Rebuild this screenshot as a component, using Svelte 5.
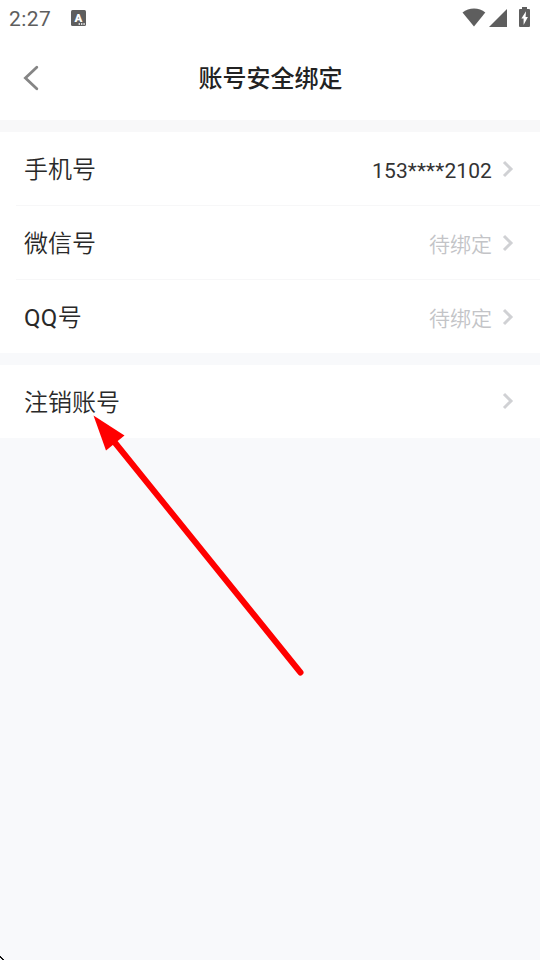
<script>
  const bindings = [
    { prefix: '', label: '手机号', value: '153****2102', bound: true },
    { prefix: '', label: '微信号', value: '待绑定', bound: false },
    { prefix: 'QQ', label: '号', value: '待绑定', bound: false }
  ];
</script>

{#snippet chevron()}
  <svg class="chevron" width="12" height="18" viewBox="0 0 12 18">
    <path d="M2 2 L9 9 L2 16" fill="none" stroke="currentColor" stroke-width="3" />
  </svg>
{/snippet}

<div class="screen">
  <div class="status">
    <span class="time">2:27</span>
    <svg class="app" width="15" height="16" viewBox="0 0 15 16">
      <rect width="15" height="16" rx="1.5" fill="#5e5e5e" />
      <text x="7.3" y="11.8" text-anchor="middle" font-size="11.5" font-weight="900" fill="#fff">A</text>
      <path d="M7.6 14 H14" stroke="#fff" stroke-width="1.4" stroke-dasharray="1.4 1" />
    </svg>
    <svg class="signals" width="70" height="22" viewBox="0 0 70 22">
      <g fill="#5e5e5e">
        <path d="M.5 6.6 C7 1.2 17.2 1.2 23.3 6.6 L12 20.5 Z" />
        <path d="M45 3 V21 H27 Z" />
        <path d="M60 3 V1 H65 V3 H67 Q68 3 68 4 V20 Q68 21 67 21 H58 Q57 21 57 20 V4 Q57 3 58 3 Z" />
      </g>
      <path d="M64 5.2 L59.4 12.6 H61.6 V19 L65.9 10.9 H63.6 Z" fill="#fff" />
    </svg>
  </div>

  <header>
    <svg class="back" width="18" height="26" viewBox="0 0 18 26">
      <path d="M14.8 2.2 L3.4 13 L14.8 23.8" fill="none" stroke="#858585" stroke-width="2.8" stroke-linecap="round" />
    </svg>
    <h1>账号安全绑定</h1>
  </header>

  <section class="group">
    {#each bindings as item}
      <div class="row">
        <span class="label"><span class="latin">{item.prefix}</span>{item.label}</span>
        <span class="value" class:bound={item.bound}>{item.value}</span>
        {@render chevron()}
      </div>
    {/each}
  </section>

  <section class="group last">
    <div class="row">
      <span class="label">注销账号</span>
      {@render chevron()}
    </div>
  </section>

  <svg class="pointer" width="540" height="960" viewBox="0 0 540 960">
    <path d="M112 439 L300.5 672.5" stroke="#f00" stroke-width="6" stroke-linecap="round" />
    <path d="M93.5 415.5 L124.5 435.5 L106 450.5 Z" fill="#f00" />
    <path d="M0 956 h1 v1 h1 v1 h1 v1 h1 v1 h-2 v-1 h-1 v-1 h-1 Z" fill="#111" />
  </svg>
</div>

<style>
  :global(body) {
    margin: 0;
  }

  .screen {
    position: relative;
    width: 540px;
    height: 960px;
    overflow: hidden;
    background: #f8f9fb;
    font-family: Roboto, "Noto Sans CJK SC", sans-serif;
    color: #292929;
  }

  .status {
    display: flex;
    box-sizing: border-box;
    height: 37px;
    padding: 6px 8px 0 9px;
    background: #fff;
  }

  .time {
    width: 62px;
    font-size: 21px;
    line-height: 26px;
    letter-spacing: 0.4px;
    color: #5e5e5e;
  }

  .app {
    margin-top: 4px;
  }

  .signals {
    margin: 0 0 0 auto;
  }

  header {
    display: flex;
    align-items: center;
    height: 83px;
    padding: 0 22px;
    background: #fff;
    border-bottom: 12px solid #f8f8f9;
  }

  .back {
    flex: none;
    margin-bottom: 1px;
  }

  h1 {
    flex: 1;
    margin: 0 17px 0 0;
    padding-top: 1px;
    font-size: 24px;
    font-weight: 500;
    line-height: 36px;
    text-align: center;
    color: #222;
  }

  .group {
    background: #fff;
  }

  .last {
    margin-top: 12px;
  }

  .row {
    display: flex;
    align-items: center;
    box-sizing: border-box;
    height: 73px;
    padding: 0 26px 0 24px;
  }

  .row + .row {
    height: 74px;
    border-top: 1px solid transparent;
    background: linear-gradient(#f7f7f8, #f7f7f8) 16px 0 / 100% 1px no-repeat border-box;
  }

  .label {
    flex: 1;
    padding-top: 2px;
    font-size: 24px;
    font-weight: 350;
    line-height: 36px;
  }

  .latin {
    font-weight: 400;
    letter-spacing: 0.3px;
  }

  .value {
    padding-top: 4px;
    font-size: 21px;
    font-weight: 350;
    line-height: 32px;
    color: #c3c4c7;
  }

  .bound {
    font-weight: 400;
    letter-spacing: 0.1px;
    color: #333;
  }

  .chevron {
    margin-left: 10px;
    color: #d0d1d4;
  }

  .last .row {
    padding-bottom: 1px;
  }

  .last .label {
    padding-top: 3px;
  }

  .pointer {
    position: absolute;
    top: 0;
    left: 0;
    pointer-events: none;
  }
</style>
